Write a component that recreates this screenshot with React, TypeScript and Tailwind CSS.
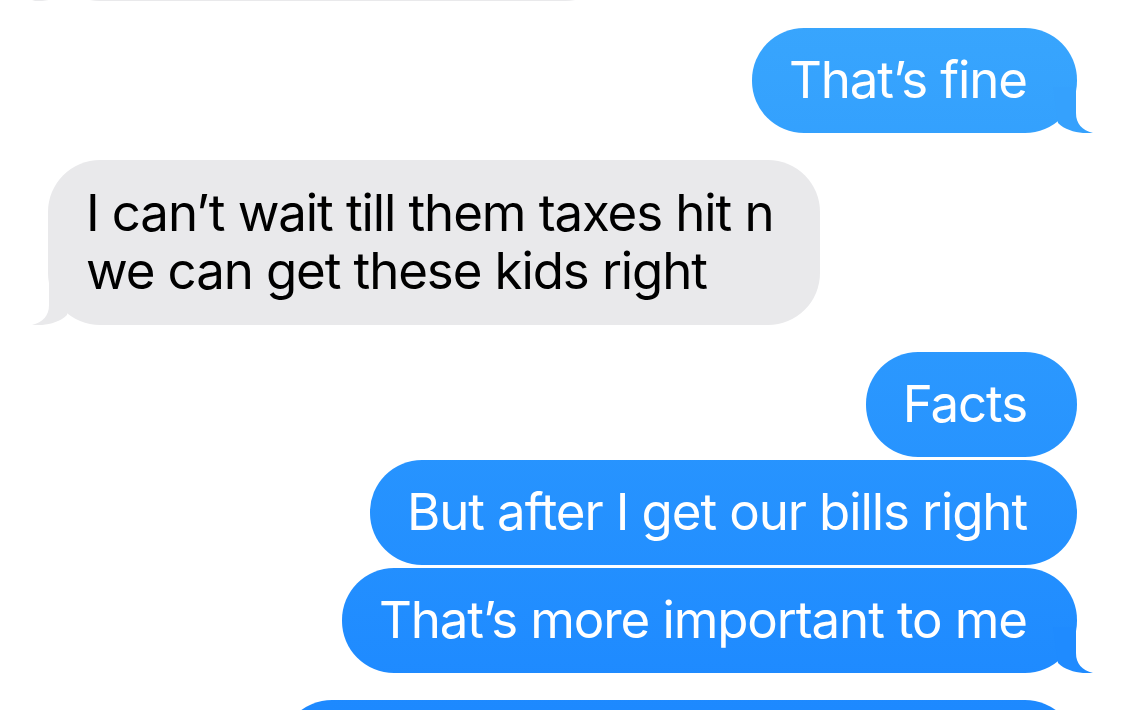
import React from "react";

const font = { fontFamily: "Inter, 'Noto Sans', 'Liberation Sans', sans-serif" };

function SentTail({ color }: { color: string }) {
  return (
    <svg
      className="absolute right-[-16px] bottom-0"
      width="40"
      height="46"
      viewBox="0 0 40 46"
    >
      <path d="M23 0 L23 26 C23 37 29 43 40 46 C30 47 14 45 5 36 L0 0 Z" fill={color} />
    </svg>
  );
}

function RecvTail() {
  return (
    <svg
      className="absolute left-[-16px] bottom-0"
      width="40"
      height="46"
      viewBox="0 0 40 46"
    >
      <path d="M17 0 L17 26 C17 37 11 43 0 46 C10 47 26 45 35 36 L40 0 Z" fill="#e9e9eb" />
    </svg>
  );
}

function Sent({ text, tail, tailColor }: { text: string; tail?: boolean; tailColor?: string }) {
  return (
    <div className="relative rounded-[52px] bg-linear-to-b from-[#39a6fd] to-[#1d89ff] bg-fixed pl-[37px] pr-[50px] pt-[23px] pb-[24px] text-white text-[51px] leading-[58px] tracking-[-1.1px]">
      {text}
      {tail && <SentTail color={tailColor || "#1f8bff"} />}
    </div>
  );
}

export default function App() {
  return (
    <div className="w-[1125px] h-[710px] overflow-hidden bg-white" style={font}>
      <div className="flex flex-col px-[48px]">
        {/* partial received bubble at very top */}
        <div className="relative mt-[-103px] h-[104px] w-[569px] rounded-[52px] bg-[#e9e9eb]">
          <RecvTail />
        </div>

        <div className="mt-[27px] flex justify-end">
          <Sent text="That’s fine" tail tailColor="#35a1fd" />
        </div>

        <div className="mt-[27px] flex justify-start">
          <div className="relative w-[772px] rounded-[52px] bg-[#e9e9eb] pl-[38px] pr-[20px] pt-[24px] pb-[25px] text-black text-[51px] leading-[58px] tracking-[-1.1px] whitespace-nowrap">
            I can’t wait till them taxes hit n
            <br />
            we can get these kids right
            <RecvTail />
          </div>
        </div>

        <div className="mt-[27px] flex flex-col items-end gap-[3px]">
          <Sent text="Facts" />
          <Sent text="But after I get our bills right" />
          <Sent text="That’s more important to me" tail tailColor="#1f8bff" />
        </div>

        <div className="mt-[27px] flex justify-end">
          <div className="h-[104px] w-[797px] rounded-[52px] bg-linear-to-b from-[#39a6fd] to-[#1d89ff] bg-fixed" />
        </div>
      </div>
    </div>
  );
}
